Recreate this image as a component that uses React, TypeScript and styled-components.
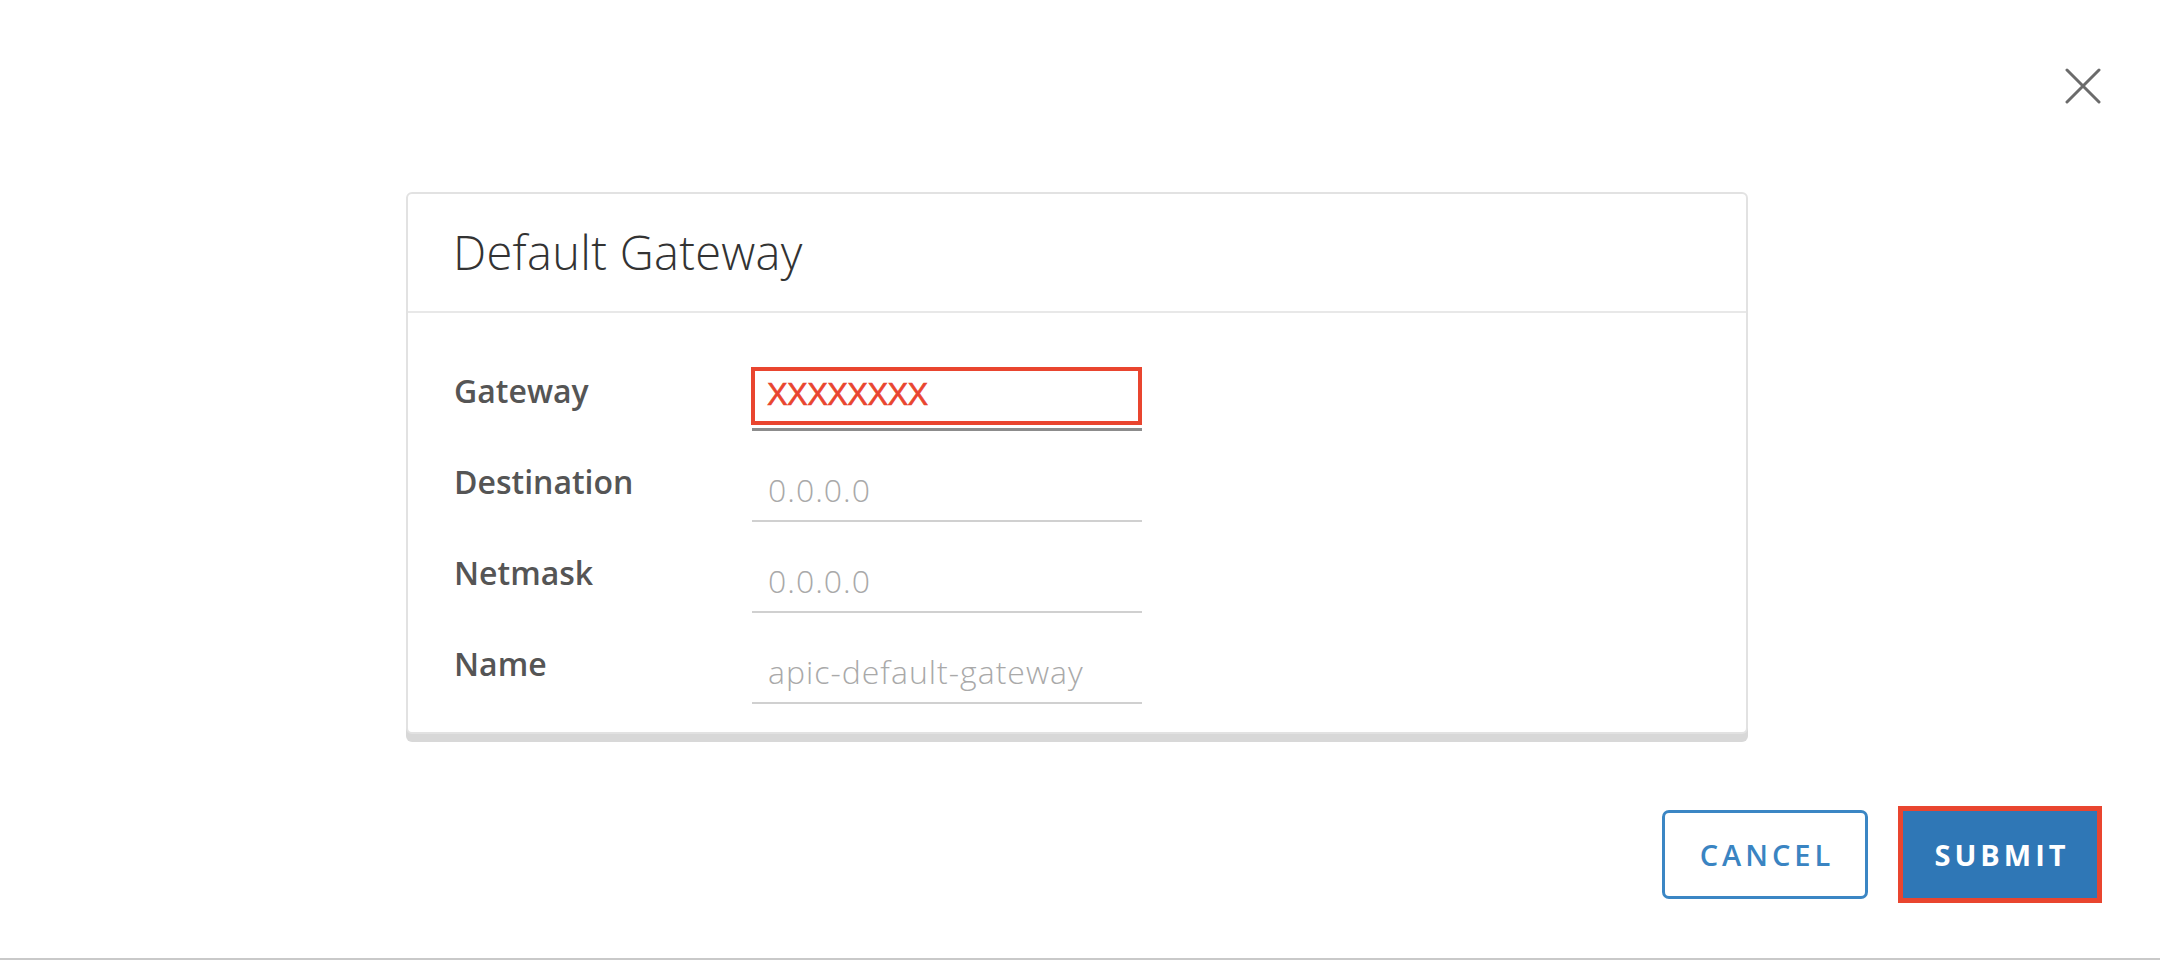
import React from 'react';
import styled, { createGlobalStyle } from 'styled-components';

interface FieldDef {
  label: string,
  value: string,
  redacted?: boolean,
};

const FIELDS: FieldDef[] = [
  { label: 'Gateway', value: 'XXXXXXXX', redacted: true },
  { label: 'Destination', value: '0.0.0.0' },
  { label: 'Netmask', value: '0.0.0.0' },
  { label: 'Name', value: 'apic-default-gateway' },
];

const App: React.FC = () => {
  return (
    <>
      <GlobalStyle />
      <Page data-css='GatewayModal'>
        <TopBar>
          <CloseButton aria-label='close'>
            <svg width='36' height='36' viewBox='0 0 36 36'>
              <path d='M2 2 L34 34 M34 2 L2 34' stroke='#6b6b6b' strokeWidth='3' strokeLinecap='round' />
            </svg>
          </CloseButton>
        </TopBar>
        <Card>
          <CardHeader>Default Gateway</CardHeader>
          <CardBody>
            {FIELDS.map((f) => (
              <Row key={f.label}>
                <Label>{f.label}</Label>
                <Field $dark={f.redacted}>
                  {f.redacted
                    ? <Redact><RedactText>{f.value}</RedactText></Redact>
                    : <Placeholder>{f.value}</Placeholder>}
                </Field>
              </Row>
            ))}
          </CardBody>
        </Card>
        <Footer>
          <Button>CANCEL</Button>
          <Button $primary>SUBMIT</Button>
        </Footer>
      </Page>
    </>
  );
};

export default App;

const GlobalStyle = createGlobalStyle`
  html, body {
    margin: 0;
    padding: 0;
    background: #ffffff;
  }
  body {
    font-family: 'Open Sans', 'Liberation Sans', sans-serif;
  }
`;

const Page = styled.div`
  box-sizing: border-box;
  width: 2160px;
  height: 960px;
  border-bottom: 2px solid #c9c9c9;
  background: #ffffff;
  display: flex;
  flex-direction: column;
`;

const TopBar = styled.div`
  box-sizing: border-box;
  height: 192px;
  display: flex;
  justify-content: flex-end;
  align-items: flex-start;
  padding: 68px 59px 0 0;
`;

const CloseButton = styled.div`
  width: 36px;
  height: 36px;
  svg {
    display: block;
  }
`;

const Card = styled.div`
  box-sizing: border-box;
  width: 1342px;
  margin-left: 406px;
  border: 2px solid #e2e2e2;
  border-radius: 6px;
  box-shadow: 0 8px 0 0 #d8d8d8;
  background: #ffffff;
`;

const CardHeader = styled.div`
  box-sizing: border-box;
  height: 119px;
  display: flex;
  align-items: center;
  padding: 0 0 2px 45px;
  border-bottom: 2px solid #e8e8e8;
  font-size: 47px;
  font-weight: 300;
  letter-spacing: 0.3px;
  color: #333333;
`;

const CardBody = styled.div`
  display: flex;
  flex-direction: column;
  gap: 27px;
  padding: 54px 0 28px 46px;
`;

const Row = styled.div`
  display: flex;
  align-items: flex-start;
`;

const Label = styled.div`
  width: 298px;
  margin-top: 4px;
  font-size: 32px;
  line-height: 40px;
  font-weight: 600;
  color: #555555;
`;

const Field = styled.div<{ $dark?: boolean }>`
  box-sizing: border-box;
  width: 390px;
  height: 64px;
  border-bottom: ${p => p.$dark ? '3px solid #8c8c8c' : '2px solid #d0d0d0'};
  display: flex;
  align-items: flex-start;
`;

const Placeholder = styled.span`
  padding: 12px 0 0 16px;
  font-size: 32px;
  line-height: 40px;
  font-weight: 300;
  letter-spacing: 1px;
  color: #a9a9a9;
  white-space: nowrap;
`;

const Redact = styled.div`
  box-sizing: border-box;
  width: 392px;
  height: 58px;
  margin-left: -1px;
  border: 4px solid #e9452f;
  padding: 4px 0 0 12px;
`;

const RedactText = styled.span`
  font-family: 'Liberation Sans', Arial, sans-serif;
  font-size: 31px;
  line-height: 40px;
  letter-spacing: -0.6px;
  color: #e9452f;
  -webkit-text-stroke: 0.6px #e9452f;
`;

const Footer = styled.div`
  display: flex;
  justify-content: flex-end;
  align-items: center;
  gap: 30px;
  margin-top: 72px;
  padding-right: 58px;
`;

const Button = styled.div<{ $primary?: boolean }>`
  box-sizing: border-box;
  display: flex;
  align-items: center;
  justify-content: center;
  width: ${p => p.$primary ? '204px' : '206px'};
  height: ${p => p.$primary ? '97px' : '89px'};
  border: ${p => p.$primary ? '5px solid #e9452f' : '3px solid #3b86c4'};
  border-radius: ${p => p.$primary ? '0' : '7px'};
  background: ${p => p.$primary ? '#2f77b6' : '#ffffff'};
  color: ${p => p.$primary ? '#ffffff' : '#3a84c2'};
  font-size: 29px;
  font-weight: ${p => p.$primary ? 700 : 600};
  letter-spacing: 4px;
  padding-left: 4px;
`;
